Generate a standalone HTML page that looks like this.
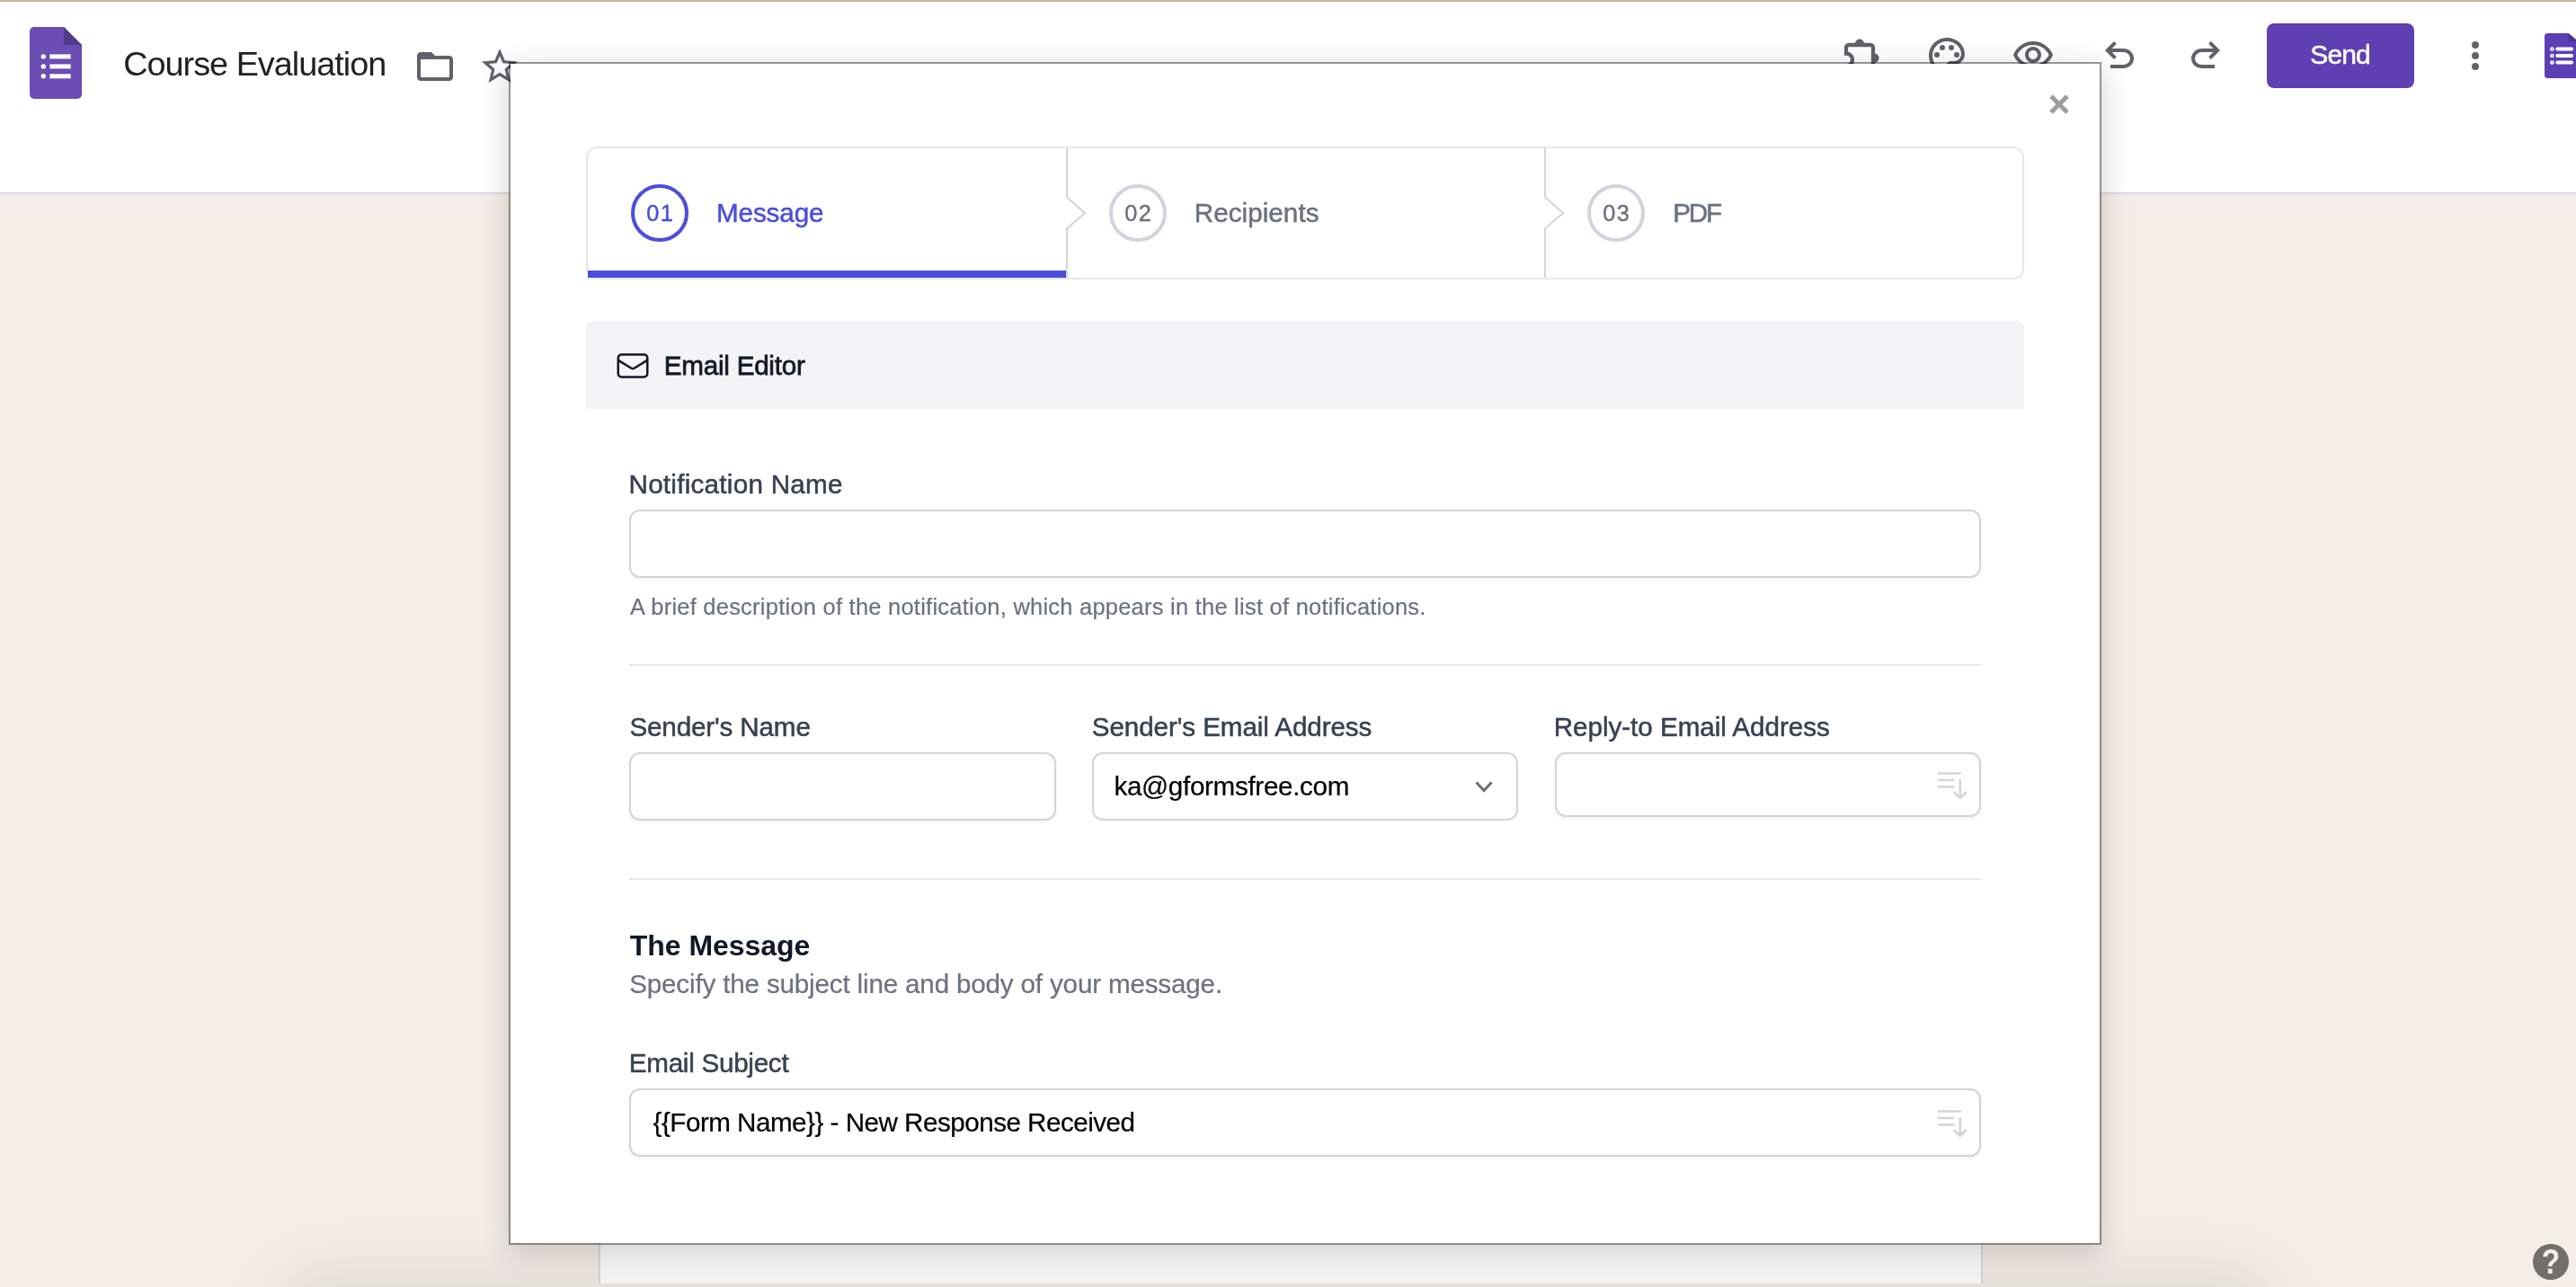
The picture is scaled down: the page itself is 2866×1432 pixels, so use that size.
<!DOCTYPE html>
<html lang="en">
<head>
<meta charset="utf-8">
<title>Course Evaluation - Google Forms</title>
<style>
*{box-sizing:border-box;margin:0;padding:0}
html,body{width:2866px;height:1432px;overflow:hidden}
body{position:relative;background:#f5ede8;font-family:"Liberation Sans",sans-serif;color:#111827}
#root{position:absolute;left:0;top:0;width:2866px;height:1432px;overflow:hidden;will-change:transform}
@media (max-width:2000px){html,body{width:1433px;height:716px}#root{zoom:.5}}
.abs{position:absolute}
.t{position:absolute;white-space:nowrap;line-height:1;-webkit-text-stroke:.22px}
#topline{left:0;top:0;width:2866px;height:2px;background:#c8b49a;z-index:5}
#header{left:0;top:0;width:2866px;height:216px;background:#fff;border-bottom:2px solid #dadce0}
.gi{position:absolute;width:48px;height:48px;fill:#5f6368}
#send{left:2522px;top:26px;width:164px;height:72px;border-radius:8px;background:#5f3fb1}
#card{left:666px;top:900px;width:1540px;height:528px;background:#fff;border-left:2px solid #dadce0;border-right:2px solid #dadce0}
#bshadow{left:330px;top:1440px;width:2180px;height:60px;border-radius:30px;box-shadow:0 0 70px 20px rgba(30,40,20,.105)}
#help{left:2818px;top:1384px;width:40px;height:40px;border-radius:50%;background:#726e6a}
#helpt{left:2818px;top:1383.800px;width:40px;text-align:center;font-size:39px;font-weight:bold;color:#f5ede8;transform:scaleX(.86);-webkit-text-stroke:0}
#modal{left:566px;top:69px;width:1772px;height:1316px;background:#fff;background-clip:padding-box;border:2px solid rgba(0,0,0,.4);box-shadow:0 8px 32px rgba(0,0,0,.185)}
#steps{left:652px;top:163px;width:1600px;height:148px;border:2px solid #e5e7eb;border-radius:12px;background:#fff}
#bar{left:654px;top:301px;width:532px;height:8px;background:#4b4edc}
.circ{position:absolute;width:64px;height:64px;border-radius:50%;border:4px solid #d1d5db;top:205px}
.num{font-size:25.300px;color:#6b7280;width:64px;text-align:center;top:224.600px;-webkit-text-stroke:0.450px;letter-spacing:1.300px;padding-left:1.300px}
#ebar{left:652px;top:357px;width:1600px;height:98px;background:#f3f4f6;border-radius:8px 8px 0 0}
.inp{position:absolute;height:76px;border:2px solid #d1d5db;border-radius:12px;background:#fff;box-shadow:0 2px 4px rgba(0,0,0,.05)}
.hr{position:absolute;left:700px;width:1504px;height:2px;background:#e5e7eb}
</style>
<style id="textcss">
#t_title{left:137.28px;top:53.30px;font-size:37.8px;letter-spacing:-0.995px;color:#202124;-webkit-text-stroke:0}
#t_send{left:2570.25px;top:45.91px;font-size:30px;letter-spacing:-0.873px;color:#fff;-webkit-text-stroke:.55px #fff}
#t_msg{left:797.05px;top:222.04px;font-size:29.6px;letter-spacing:-0.114px;color:#4b4edc;-webkit-text-stroke:.5px}
#t_rec{left:1328.81px;top:222.04px;font-size:29.6px;letter-spacing:0.054px;color:#6b7280;-webkit-text-stroke:.5px}
#t_pdf{left:1861.22px;top:222.04px;font-size:29.6px;letter-spacing:-2.166px;color:#6b7280;-webkit-text-stroke:.5px}
#t_ee{left:738.87px;top:391.94px;font-size:29.6px;letter-spacing:-0.239px;color:#111827;-webkit-text-stroke:.8px}
#t_notif{left:699.51px;top:524.04px;font-size:29.6px;letter-spacing:0.271px;color:#374151;-webkit-text-stroke:.5px}
#t_help{left:701.11px;top:662.50px;font-size:25.4px;letter-spacing:0.276px;color:#6b7280}
#t_sname{left:700.41px;top:793.94px;font-size:29.6px;letter-spacing:-0.133px;color:#374151;-webkit-text-stroke:.5px}
#t_semail{left:1214.83px;top:793.94px;font-size:29.6px;letter-spacing:-0.081px;color:#374151;-webkit-text-stroke:.5px}
#t_reply{left:1728.79px;top:793.94px;font-size:29.6px;letter-spacing:-0.031px;color:#374151;-webkit-text-stroke:.5px}
#t_ka{left:1239.45px;top:859.64px;font-size:29.6px;letter-spacing:-0.305px;color:#000}
#t_themsg{left:700.87px;top:1035.91px;font-size:32px;letter-spacing:-0.044px;color:#111827;font-weight:bold;-webkit-text-stroke:0}
#t_spec{left:700.21px;top:1079.74px;font-size:29.6px;letter-spacing:-0.163px;color:#6b7280}
#t_esubj{left:699.80px;top:1167.94px;font-size:29.6px;letter-spacing:-0.258px;color:#374151;-webkit-text-stroke:.5px}
#t_form{left:726.57px;top:1234.24px;font-size:29.6px;letter-spacing:-0.496px;color:#000}
</style>
</head>
<body>
<div id="root">
<div id="header" class="abs"></div>
<div id="topline" class="abs"></div>

<!-- Forms logo -->
<svg class="abs" style="left:33px;top:30px" width="58" height="80" viewBox="0 0 58 80">
  <path d="M5 0h33l20 20v55a5 5 0 0 1-5 5H5a5 5 0 0 1-5-5V5a5 5 0 0 1 5-5z" fill="#6b4db3"/>
  <path d="M38 0l20 20H38z" fill="#533a8b"/>
  <circle cx="15.300" cy="32.900" r="2.700" fill="#fff"/><rect x="22.400" y="30.400" width="23.300" height="5" fill="#fff"/>
  <circle cx="15.300" cy="43.900" r="2.700" fill="#fff"/><rect x="22.400" y="41.400" width="23.300" height="5" fill="#fff"/>
  <circle cx="15.300" cy="54.800" r="2.700" fill="#fff"/><rect x="22.400" y="52.300" width="23.300" height="5" fill="#fff"/>
</svg>
<div id="t_title" class="t">Course Evaluation</div>

<!-- folder / star -->
<svg class="gi" style="left:460px;top:50px" viewBox="0 0 24 24"><path d="M4 20q-.825 0-1.412-.587T2 18V6q0-.825.588-1.412T4 4h6l2 2h8q.825 0 1.413.588T22 8v10q0 .825-.587 1.413T20 20zm0-2h16V8H4z"/></svg>
<svg class="gi" style="left:532px;top:50.200px" viewBox="0 0 24 24"><path d="M22 9.240l-7.190-.620L12 2 9.190 8.630 2 9.240l5.460 4.730L5.820 21 12 17.270 18.180 21l-1.630-7.030L22 9.240zM12 15.400l-3.760 2.270 1-4.280-3.320-2.880 4.380-.380L12 6.100l1.710 4.040 4.380.380-3.320 2.880 1 4.280L12 15.400z"/></svg>

<!-- right toolbar icons -->
<svg class="abs" style="left:2046px;top:38px" width="48" height="48" viewBox="0 0 48 48"><path d="M8 21.500V15a3 3 0 0 1 3-3H35a3 3 0 0 1 3 3V41H8V35.500a7 7 0 0 0 0-14z" fill="none" stroke="#5f6368" stroke-width="4.300"/><path d="M18 10.500a5 5 0 0 1 10 0zM39.500 21.600a5 5 0 0 1 0 10z" fill="#5f6368"/></svg>
<svg class="gi" style="left:2142px;top:38px" viewBox="0 0 24 24"><path d="M12 22C6.490 22 2 17.510 2 12S6.490 2 12 2s10 4.040 10 9c0 3.310-2.690 6-6 6h-1.770c-.280 0-.500.220-.500.500 0 .120.050.230.130.330.410.470.640 1.060.640 1.670A2.500 2.500 0 0 1 12 22zm0-18c-4.410 0-8 3.590-8 8s3.590 8 8 8c.280 0 .500-.220.500-.500a.540.540 0 0 0-.140-.350c-.410-.460-.630-1.050-.630-1.650a2.500 2.500 0 0 1 2.500-2.500H16c2.210 0 4-1.790 4-4 0-3.860-3.590-7-8-7z"/><circle cx="6.500" cy="11.500" r="1.500"/><circle cx="9.500" cy="7.500" r="1.500"/><circle cx="14.500" cy="7.500" r="1.500"/><circle cx="17.500" cy="11.500" r="1.500"/></svg>
<svg class="gi" style="left:2238px;top:38px" viewBox="0 0 24 24"><path d="M12 6c3.790 0 7.170 2.130 8.820 5.500C19.170 14.870 15.790 17 12 17s-7.170-2.130-8.820-5.500C4.830 8.130 8.210 6 12 6m0-2C7 4 2.730 7.110 1 11.500 2.730 15.890 7 19 12 19s9.270-3.110 11-7.500C21.270 7.110 17 4 12 4zm0 5c1.380 0 2.500 1.120 2.500 2.500S13.380 14 12 14s-2.500-1.120-2.500-2.500S10.620 9 12 9m0-2c-2.480 0-4.500 2.020-4.500 4.500S9.520 16 12 16s4.500-2.020 4.500-4.500S14.480 7 12 7z"/></svg>
<svg class="gi" style="left:2334px;top:38px" viewBox="0 0 24 24"><path d="M7 19v-2h7.100q1.575 0 2.738-1T18 13.500 16.838 11 14.100 10H7.800l2.600 2.600L9 14 4 9l5-5 1.400 1.400L7.800 8h6.300q2.425 0 4.163 1.575T20 13.500t-1.737 3.925T14.100 19z"/></svg>
<svg class="gi" style="left:2430px;top:38px;transform:scaleX(-1)" viewBox="0 0 24 24"><path d="M7 19v-2h7.100q1.575 0 2.738-1T18 13.500 16.838 11 14.100 10H7.800l2.600 2.600L9 14 4 9l5-5 1.400 1.400L7.800 8h6.300q2.425 0 4.163 1.575T20 13.500t-1.737 3.925T14.100 19z"/></svg>
<div id="send" class="abs"></div>
<div id="t_send" class="t">Send</div>
<svg class="gi" style="left:2730px;top:38px" viewBox="0 0 24 24"><circle cx="12" cy="6" r="2"/><circle cx="12" cy="12" r="2"/><circle cx="12" cy="18" r="2"/></svg>
<!-- right addon icon (cut off) -->
<svg class="abs" style="left:2831px;top:37px" width="40" height="50" viewBox="0 0 40 50">
  <path d="M3.500 0H26.500L40 11V50H3.500A3.500 3.500 0 0 1 0 46.500V3.500A3.500 3.500 0 0 1 3.500 0z" fill="#5c3fb5"/>
  <path d="M26.500 0L40 11V9.500H30a3.500 3.500 0 0 1-3.500-3.500z" fill="#4a3296"/>
  <g stroke="#fff" stroke-width="4" stroke-linecap="round"><path d="M14.300 17.500H30M14.300 25H30M14.300 32.600H30"/></g>
  <circle cx="8.400" cy="17.500" r="2.300" fill="#fff"/><circle cx="8.400" cy="25" r="2.300" fill="#fff"/><circle cx="8.400" cy="32.600" r="2.300" fill="#fff"/>
  <circle cx="8.400" cy="17.500" r=".700" fill="#5c3fb5"/><circle cx="8.400" cy="25" r=".700" fill="#5c3fb5"/><circle cx="8.400" cy="32.600" r=".700" fill="#5c3fb5"/>
</svg>

<!-- page content behind modal -->
<div id="card" class="abs"></div>
<div id="bshadow" class="abs"></div>
<div id="help" class="abs"></div>
<div id="helpt" class="t">?</div>

<!-- MODAL -->
<div id="modal" class="abs"></div>
<!--MC-START-->
<!-- close X -->
<svg class="abs" style="left:2279px;top:104px" width="24" height="24" viewBox="0 0 24 24"><path d="M3 3l18 18M21 3L3 21" stroke="#9c9c9c" stroke-width="5" fill="none" style="filter:blur(.5px)"/></svg>

<!-- stepper -->
<div id="steps" class="abs"></div>
<div id="bar" class="abs"></div>
<svg class="abs" style="left:1176px;top:165px" width="40" height="144" viewBox="0 0 40 144"><path d="M11 0V54.500L31 72L11 89.500V144" fill="none" stroke="#d1d5db" stroke-width="2"/></svg>
<svg class="abs" style="left:1708px;top:165px" width="40" height="144" viewBox="0 0 40 144"><path d="M11 0V54.500L31 72L11 89.500V144" fill="none" stroke="#d1d5db" stroke-width="2"/></svg>

<div class="circ" style="left:702px;border-color:#4b4edc"></div>
<div class="t num" style="left:702px;color:#4b4edc">01</div>
<div id="t_msg" class="t">Message</div>

<div class="circ" style="left:1234px"></div>
<div class="t num" style="left:1234px">02</div>
<div id="t_rec" class="t">Recipients</div>

<div class="circ" style="left:1766px"></div>
<div class="t num" style="left:1766px">03</div>
<div id="t_pdf" class="t">PDF</div>

<!-- email editor bar -->
<div id="ebar" class="abs"></div>
<svg class="abs" style="left:683.500px;top:386.500px" width="40" height="40" viewBox="0 0 24 24" fill="none" stroke="#111827" stroke-width="1.500" stroke-linecap="round" stroke-linejoin="round"><path d="M21.750 6.750v10.500a2.250 2.250 0 01-2.250 2.250h-15a2.250 2.250 0 01-2.250-2.250V6.750m19.500 0A2.250 2.250 0 0019.500 4.500h-15a2.250 2.250 0 00-2.250 2.250m19.500 0v.243a2.250 2.250 0 01-1.070 1.916l-7.500 4.615a2.250 2.250 0 01-2.360 0L3.320 8.910a2.250 2.250 0 01-1.070-1.916V6.750"/></svg>
<div id="t_ee" class="t">Email Editor</div>

<!-- Notification name -->
<div id="t_notif" class="t">Notification Name</div>
<div class="inp" style="left:700px;top:567px;width:1504px"></div>
<div id="t_help" class="t">A brief description of the notification, which appears in the list of notifications.</div>
<div class="hr" style="top:739px"></div>

<!-- Sender row -->
<div id="t_sname" class="t">Sender's Name</div>
<div class="inp" style="left:700px;top:837px;width:475px"></div>
<div id="t_semail" class="t">Sender's Email Address</div>
<div class="inp" style="left:1215px;top:837px;width:474px;box-shadow:none"></div>
<div id="t_ka" class="t">ka@gformsfree.com</div>
<svg class="abs" style="left:1638px;top:865px" width="26" height="20" viewBox="0 0 26 20"><path d="M4.500 5.500L13 14.500L21.500 5.500" fill="none" stroke="#6b6f76" stroke-width="3"/></svg>
<div id="t_reply" class="t">Reply-to Email Address</div>
<div class="inp" style="left:1730px;top:837px;width:474px;height:72px"></div>
<svg class="abs" style="left:2152px;top:853px" width="40" height="40" viewBox="0 0 24 24" fill="none" stroke="#d1d5db" stroke-width="1.500" stroke-linecap="round" stroke-linejoin="round"><path d="M3 4.500h14.250M3 9h9.750M3 13.500h9.750m4.500-4.500v12m0 0l-3.750-3.750M17.250 21L21 17.250"/></svg>
<div class="hr" style="top:977px"></div>

<!-- The message -->
<div id="t_themsg" class="t">The Message</div>
<div id="t_spec" class="t">Specify the subject line and body of your message.</div>
<div id="t_esubj" class="t">Email Subject</div>
<div class="inp" style="left:700px;top:1211px;width:1504px"></div>
<div id="t_form" class="t">{{Form Name}} - New Response Received</div>
<svg class="abs" style="left:2152px;top:1229px" width="40" height="40" viewBox="0 0 24 24" fill="none" stroke="#d1d5db" stroke-width="1.500" stroke-linecap="round" stroke-linejoin="round"><path d="M3 4.500h14.250M3 9h9.750M3 13.500h9.750m4.500-4.500v12m0 0l-3.750-3.750M17.250 21L21 17.250"/></svg>
<!--MC-END-->
</div>
</body>
</html>
